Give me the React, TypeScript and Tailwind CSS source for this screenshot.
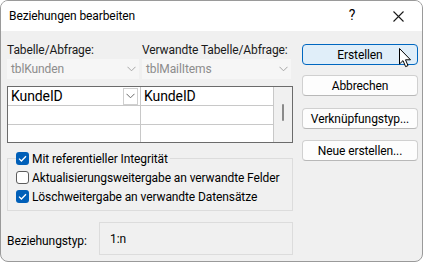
import React from "react";

const font = { fontFamily: 'Roboto, "Segoe UI", sans-serif' };

function Chevron({ color }: { color: string }) {
  return (
    <svg width="9" height="6" viewBox="0 0 9 6" fill="none">
      <path d="M0.5 0.8 L4.5 4.8 L8.5 0.8" stroke={color} strokeWidth="1" />
    </svg>
  );
}

function Check({ checked }: { checked: boolean }) {
  return checked ? (
    <div className="w-[13px] h-[13px] rounded-[3px] bg-[#005fb8] flex items-center justify-center shrink-0">
      <svg width="9" height="7" viewBox="0 0 9 7" fill="none">
        <path d="M1 3.6 L3.4 6 L8 1.2" stroke="white" strokeWidth="1.3" />
      </svg>
    </div>
  ) : (
    <div className="w-[13px] h-[13px] rounded-[3px] bg-white border border-[#5c5c5c] shrink-0" />
  );
}

function Btn({ label, primary }: { label: string; primary?: boolean }) {
  return (
    <div
      className={
        "h-[21px] rounded-[4px] flex items-center justify-center text-[12px] text-black border whitespace-nowrap " +
        (primary
          ? "bg-[#e0eef9] border-[#0067c0]"
          : "bg-[#fdfdfd] border-[#d0d0d0] border-b-[#b8b8b8]")
      }
    >
      {label}
    </div>
  );
}

export default function App() {
  return (
    <div className="w-[425px] h-[264px] bg-white whitespace-nowrap tracking-[-0.1px]" style={font}>
      <div className="w-[423px] h-[262px] rounded-[8px] border border-[#9a9a9a] overflow-hidden flex flex-col bg-[#f0f0f0]">
        {/* title bar */}
        <div className="h-[30px] bg-white flex items-center shrink-0">
          <div className="pl-[8px] text-[12px] text-black flex-1 leading-none -mt-[1px]">Beziehungen bearbeiten</div>
          <div className="text-[14px] text-black w-[46px] text-center leading-none -mt-[2px]">?</div>
          <div className="w-[46px] flex items-center justify-center mr-[1px]">
            <svg width="11" height="11" viewBox="0 0 11 11">
              <path d="M0.5 0.5 L10.5 10.5 M10.5 0.5 L0.5 10.5" stroke="#1a1a1a" strokeWidth="1.1" />
            </svg>
          </div>
        </div>

        {/* body */}
        <div className="flex flex-1 pl-[6px] pt-[12px]">
          {/* left column */}
          <div className="w-[286px] flex flex-col">
            <div className="flex h-[14px] items-center text-[12px] text-[#1a1a1a] leading-none">
              <div className="w-[135px]">Tabelle/Abfrage:</div>
              <div>Verwandte Tabelle/Abfrage:</div>
            </div>
            <div className="flex mt-[2px] gap-[3px]">
              <div className="w-[132px] h-[20px] bg-[#f6f6f6] flex items-center pl-[4px] pr-[3px] text-[12px] text-[#8c8c8c]">
                <span className="flex-1">tblKunden</span>
                <Chevron color="#a6a6a6" />
              </div>
              <div className="w-[149px] h-[20px] bg-[#f6f6f6] flex items-center pl-[4px] pr-[3px] text-[12px] text-[#8c8c8c]">
                <span className="flex-1">tblMailItems</span>
                <Chevron color="#a6a6a6" />
              </div>
            </div>

            {/* grid */}
            <div className="mt-[7px] w-[286px] h-[57px] border border-[#6b6b6b] bg-white flex">
              <div className="w-[133px] flex flex-col border-r border-[#c8c8c8]">
                <div className="h-[19px] border-b border-[#c8c8c8] flex items-center pl-[3px] pr-[2px] text-[14px] text-black leading-none">
                  <span className="flex-1">KundeID</span>
                  <div className="w-[15px] h-[17px] border border-[#cfcfcf] bg-white flex items-center justify-center">
                    <Chevron color="#6a6a6a" />
                  </div>
                </div>
                <div className="h-[19px] border-b border-[#c8c8c8]" />
                <div className="flex-1" />
              </div>
              <div className="w-[133px] flex flex-col border-r border-[#c8c8c8]">
                <div className="h-[19px] border-b border-[#c8c8c8] flex items-center pl-[3px] text-[14px] text-black leading-none">
                  KundeID
                </div>
                <div className="h-[19px] border-b border-[#c8c8c8]" />
                <div className="flex-1" />
              </div>
              <div className="flex-1 bg-[#f0f0f0] flex justify-center pt-[17px]">
                <div className="w-[2px] h-[17px] bg-[#8a8a8a] rounded-full" />
              </div>
            </div>

            {/* group box */}
            <div className="mt-[15px] w-[286px] border border-[#dcdcdc] pl-[8px] pb-[4px] flex flex-col text-[12px] text-black">
              <div className="-mt-[10px] h-[19px] flex items-center self-start bg-[#f0f0f0] pr-[2px]">
                <Check checked />
                <span className="ml-[3px]">Mit referentieller Integrität</span>
              </div>
              <div className="h-[19px] flex items-center">
                <Check checked={false} />
                <span className="ml-[3px]">Aktualisierungsweitergabe an verwandte Felder</span>
              </div>
              <div className="h-[19px] flex items-center">
                <Check checked />
                <span className="ml-[3px]">Löschweitergabe an verwandte Datensätze</span>
              </div>
            </div>

            {/* relationship type */}
            <div className="mt-[11px] flex text-[12px] text-black">
              <div className="w-[92px] pt-[13px] leading-none">Beziehungstyp:</div>
              <div className="w-[194px] h-[33px] border border-[#dcdcdc] pl-[10px] pt-[10px] leading-none">1:n</div>
            </div>
          </div>

          {/* right column */}
          <div className="ml-[9px] w-[116px] flex flex-col relative">
            <div className="mt-[1px]">
              <Btn label="Erstellen" primary />
            </div>
            <div className="mt-[10px]">
              <Btn label="Abbrechen" />
            </div>
            <div className="mt-[12px]">
              <Btn label="Verknüpfungstyp..." />
            </div>
            <div className="mt-[11px]">
              <Btn label="Neue erstellen..." />
            </div>
            {/* cursor */}
            <svg className="absolute left-[97px] top-[5px]" width="13" height="20" viewBox="0 0 13 20">
              <path d="M0.5 0.5 L0.5 16 L4 12.6 L6.6 18.6 L9 17.6 L6.5 11.8 L11.5 11.8 Z" fill="white" stroke="black" strokeWidth="1" strokeLinejoin="round" />
            </svg>
          </div>
        </div>
      </div>
    </div>
  );
}
